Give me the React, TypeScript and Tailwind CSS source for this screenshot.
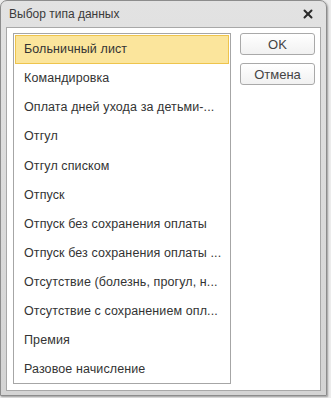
import { X } from "lucide-react";

const items = [
  "Больничный лист",
  "Командировка",
  "Оплата дней ухода за детьми-...",
  "Отгул",
  "Отгул списком",
  "Отпуск",
  "Отпуск без сохранения оплаты",
  "Отпуск без сохранения оплаты ...",
  "Отсутствие (болезнь, прогул, н...",
  "Отсутствие с сохранением опл...",
  "Премия",
  "Разовое начисление",
];

export default function App() {
  return (
    <div className="w-[331px] h-[398px] bg-[#ececec] font-['Liberation_Sans',Arial,sans-serif] text-[#333]">
      <div className="w-[327px] h-[396px] rounded-t-[7px] border border-[#8c8c8c] bg-gradient-to-b from-[#e2e2e2] to-[#d4d4d4] flex flex-col px-[5px] pb-[4px] shadow-[1px_1px_2px_rgba(0,0,0,0.35)]">
        {/* Title bar */}
        <div className="h-[26px] flex items-center justify-between pl-[3px] pr-[6px] shrink-0">
          <span className="text-[12px] text-[#3a3a3a]">Выбор типа данных</span>
          <X size={14} strokeWidth={3.4} className="text-[#2a2a2a]" />
        </div>

        {/* Content */}
        <div className="flex-1 bg-white border border-[#a8a8a8] flex gap-[9px] pl-[6px] pt-[5px] pr-[5px]">
          <div className="w-[221px] h-[351px] border border-[#a6a6a6] flex flex-col pt-[1px] px-[1px]">
            {items.map((item, idx) => (
              <div
                key={item}
                className={`h-[29.1px] shrink-0 flex items-center pl-[8px] text-[12.5px] tracking-[0.1px] whitespace-nowrap ${
                  idx === 0 ? "bg-[#fbe59c] border border-[#eec44c]" : "border border-transparent"
                }`}
              >
                {item}
              </div>
            ))}
          </div>

          <div className="flex flex-col gap-[8px]">
            <button className="w-[75px] h-[22px] border border-[#a9a9a9] rounded-[3px] bg-gradient-to-b from-white to-[#f1f1f1] text-[13px] text-[#444] leading-none">
              OK
            </button>
            <button className="w-[75px] h-[22px] border border-[#a9a9a9] rounded-[3px] bg-gradient-to-b from-white to-[#f1f1f1] text-[13px] text-[#444] leading-none">
              Отмена
            </button>
          </div>
        </div>
      </div>
    </div>
  );
}
